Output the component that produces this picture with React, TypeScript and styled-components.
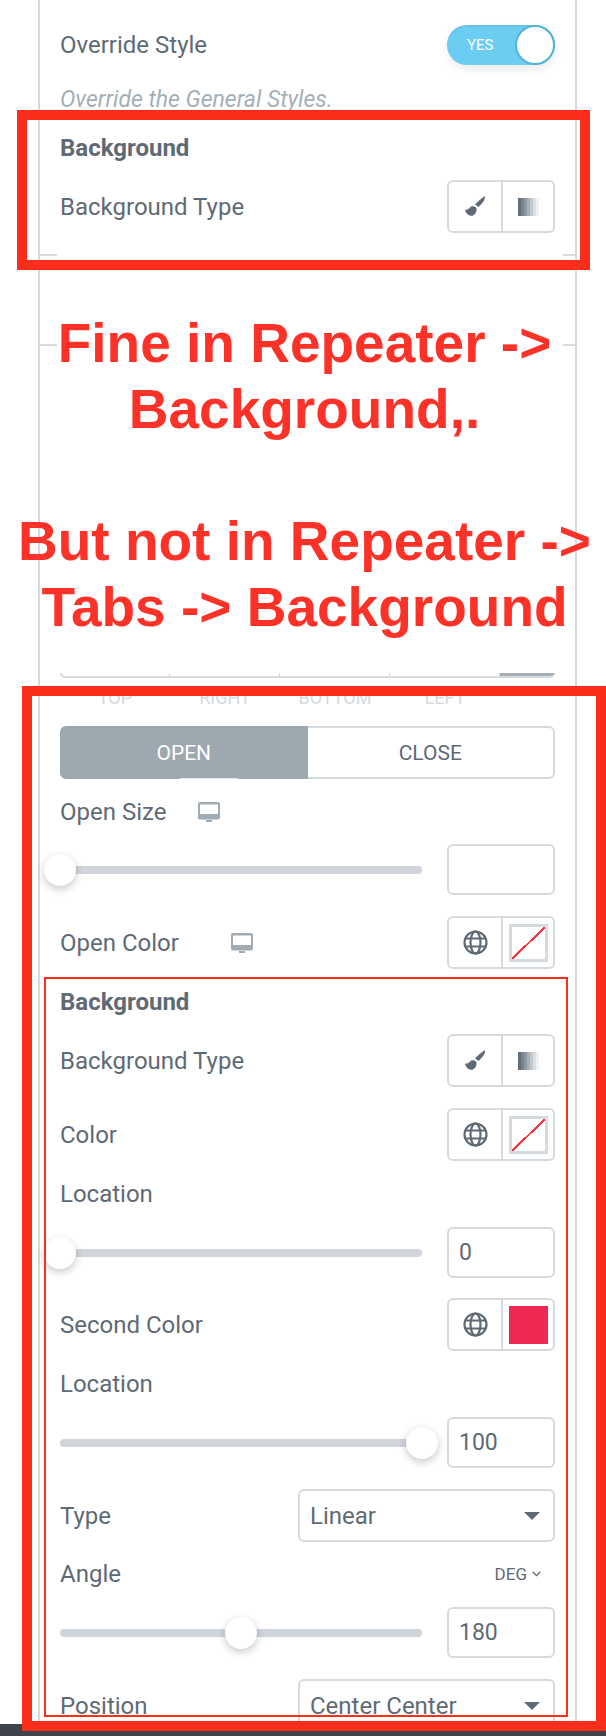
import React from "react";
import styled, { createGlobalStyle } from "styled-components";

const Global = createGlobalStyle`
  html, body { margin: 0; padding: 0; background: #fff; }
  * { box-sizing: border-box; }
`;

const RED = "#fb2d1b";
const LINE = "#d5dadf";
const TEXT = "#5f6a75";

const Page = styled.div`
  position: relative;
  width: 606px;
  height: 1736px;
  overflow: hidden;
  background: #fff;
  font-family: Roboto, "Liberation Sans", sans-serif;
  color: ${TEXT};
`;

const Panel = styled.div`
  width: 539px;
  height: 1724px;
  margin-left: 38px;
  padding: 25px 20px 0;
  border-left: 2px solid ${LINE};
  border-right: 2px solid ${LINE};
`;

const Footer = styled.div`
  position: relative;
  height: 12px;
  background: #3f444b;
`;

const Row = styled.div<{ $h: number; $mt?: number }>`
  display: flex;
  align-items: center;
  justify-content: space-between;
  height: ${(p) => p.$h}px;
  margin-top: ${(p) => p.$mt ?? 0}px;
`;

const LabelWrap = styled.div<{ $gap: number }>`
  display: flex;
  align-items: center;
  gap: ${(p) => p.$gap}px;
`;

const Label = styled.span`
  font-size: 24px;
  line-height: 24px;
  white-space: nowrap;
`;

const Heading = styled(Label)`
  font-weight: 700;
`;

const Hint = styled.div`
  margin-top: 23px;
  height: 24px;
  font-size: 23px;
  line-height: 24px;
  font-style: italic;
  color: #a4afb7;
`;

const Toggle = styled.div`
  position: relative;
  display: flex;
  align-items: center;
  width: 108px;
  height: 40px;
  padding-left: 20px;
  border-radius: 20px;
  background: #6ccdf2;
  box-shadow: inset 0 2px 2px rgba(0, 0, 0, 0.06), 0 4px 10px rgba(0, 0, 0, 0.08);
  color: #fff;
  font-size: 15px;
`;

const ToggleKnob = styled.span`
  position: absolute;
  right: 0;
  top: 0;
  width: 40px;
  height: 40px;
  border: 2px solid #54b2d6;
  border-radius: 50%;
  background: #fff;
`;

const Group = styled.div`
  display: flex;
  width: 108px;
  height: 53px;
  border: 2px solid ${LINE};
  border-radius: 6px;
  background: #fff;
`;

const GroupCell = styled.div`
  display: flex;
  align-items: center;
  justify-content: center;
  flex: 1 1 50%;
  & + & {
    border-left: 2px solid ${LINE};
  }
`;

const Swatch = styled.div<{ $color?: string }>`
  width: 39px;
  height: 38px;
  background: ${(p) =>
    p.$color ??
    `linear-gradient(to bottom right, transparent calc(50% - 1px), #ff2f3a calc(50% - 1px), #ff2f3a calc(50% + 1px), transparent calc(50% + 1px))`};
  border: ${(p) => (p.$color ? "0" : `3px solid ${LINE}`)};
`;

const GradientChip = styled.div`
  width: 21px;
  height: 18px;
  background: linear-gradient(
    to right,
    #646e78 0 14%,
    #78828b 14% 28%,
    #8f98a0 28% 42%,
    #a9b0b6 42% 56%,
    #c3c8cd 56% 70%,
    #dcdfe2 70% 84%,
    #f0f1f3 84% 100%
  );
`;

const Ticks = styled.div`
  display: flex;
  justify-content: space-between;
  height: 2px;
  margin: 21px -20px 0;
  &::before,
  &::after {
    content: "";
    width: 17px;
    background: ${LINE};
  }
  &::after {
    width: 12px;
  }
`;

const Notice = styled.div`
  position: relative;
  height: 363px;
  margin: 54px -37px 0 -43px;
  font-family: "Liberation Sans", Arial, sans-serif;
  font-size: 55px;
  font-weight: 700;
  line-height: 66px;
  text-align: center;
  color: #fc3127;
  &::before,
  &::after {
    content: "";
    position: absolute;
    top: 34px;
    height: 2px;
    background: ${LINE};
  }
  &::before {
    left: 23px;
    width: 17px;
  }
  &::after {
    right: 17px;
    width: 12px;
  }
`;

const NoticeLine = styled.div<{ $gap?: number }>`
  margin-top: ${(p) => p.$gap ?? 0}px;
  white-space: nowrap;
`;

const DimBox = styled.div`
  display: flex;
  height: 5px;
  border-bottom: 2px solid ${LINE};
  border-left: 2px solid ${LINE};
  border-radius: 0 0 6px 6px;
  overflow: hidden;
`;

const DimCell = styled.div<{ $active?: boolean }>`
  flex: 0 0 ${(p) => (p.$active ? "55px" : "110px")};
  background: ${(p) => (p.$active ? "#a4afb7" : "transparent")};
  border-right: 1px solid ${LINE};
  &:first-child {
    flex-basis: 108px;
  }
`;

const DimLabels = styled.div`
  display: flex;
  height: 20px;
  margin-top: 10px;
`;

const DimLabel = styled.span`
  flex: 0 0 110px;
  text-align: center;
  font-size: 18px;
  line-height: 20px;
  color: ${LINE};
`;

const Tabs = styled.div`
  display: flex;
  height: 53px;
  margin-top: 18px;
  font-size: 21px;
`;

const Tab = styled.div<{ $active?: boolean }>`
  position: relative;
  display: flex;
  flex: 1 1 50%;
  align-items: center;
  justify-content: center;
  border: 2px solid ${(p) => (p.$active ? "#9da8af" : LINE)};
  border-left-width: ${(p) => (p.$active ? "2px" : "0")};
  border-radius: ${(p) => (p.$active ? "6px 0 0 6px" : "0 6px 6px 0")};
  background: ${(p) => (p.$active ? "#9da8af" : "#fff")};
  color: ${(p) => (p.$active ? "#fff" : TEXT)};
`;

const TabNotch = styled.span`
  position: absolute;
  left: 118px;
  bottom: -2px;
  width: 58px;
  height: 1px;
  background: #e3e7ea;
`;

const SliderTrack = styled.div`
  position: relative;
  width: 362px;
  height: 8px;
  border-radius: 4px;
  background: #d0d5db;
`;

const SliderKnob = styled.span<{ $pos: number }>`
  position: absolute;
  top: 50%;
  left: ${(p) => p.$pos}%;
  width: 32px;
  height: 32px;
  transform: translate(-50%, -50%);
  border-radius: 50%;
  background: #fff;
  box-shadow: 0 3px 8px rgba(0, 0, 0, 0.22);
`;

const NumberInput = styled.div`
  display: flex;
  align-items: center;
  width: 108px;
  height: 51px;
  padding-left: 10px;
  border: 2px solid ${LINE};
  border-radius: 6px;
  background: #fff;
  font-size: 23px;
`;

const Select = styled.div`
  display: flex;
  align-items: center;
  justify-content: space-between;
  width: 257px;
  height: 53px;
  padding: 0 13px 0 10px;
  border: 2px solid ${LINE};
  border-radius: 6px;
  background: #fff;
  font-size: 24px;
`;

const Caret = styled.span`
  width: 0;
  height: 0;
  border-left: 8px solid transparent;
  border-right: 8px solid transparent;
  border-top: 8px solid ${TEXT};
`;

const Unit = styled.div`
  display: flex;
  align-items: center;
  gap: 5px;
  margin-right: 14px;
  font-size: 17px;
`;

const RedBox = styled.div<{ $x: number; $y: number; $w: number; $h: number; $b: number }>`
  position: absolute;
  left: ${(p) => p.$x}px;
  top: ${(p) => p.$y}px;
  width: ${(p) => p.$w}px;
  height: ${(p) => p.$h}px;
  border: ${(p) => p.$b}px solid ${RED};
  pointer-events: none;
`;

const IconSvg = styled.svg`
  display: block;
`;

const Brush = () => (
  <IconSvg width="21" height="21" viewBox="0 0 21 21">
    <path
      fill="#5f6a75"
      d="M20 0C20.500 3 18 7 13.500 11L10 8.500C13 5 17 2 20 0zM0 13.500C2 14 4 13 5 11.500C6.500 9.500 9.500 10 11 11.500C12.500 13.500 11 18 8 19.500C4.500 20.500 1 18.500 0 13.500z"
    />
  </IconSvg>
);

const Globe = () => (
  <IconSvg width="25" height="25" viewBox="0 0 25 25" fill="none" stroke="#5f6a75" strokeWidth="2.200">
    <circle cx="12.500" cy="12.500" r="11" />
    <ellipse cx="12.500" cy="12.500" rx="5" ry="11" />
    <path d="M2.500 8.500h20M2.500 16.500h20" />
  </IconSvg>
);

const Monitor = () => (
  <IconSvg width="22" height="20" viewBox="0 0 22 20">
    <rect x="0" y="0" width="22" height="17.500" rx="2" fill="#a0abb3" />
    <rect x="2" y="2.500" width="18" height="9.500" fill="#fff" />
    <rect x="8" y="18" width="6" height="2" fill="#a0abb3" />
  </IconSvg>
);

const Chevron = () => (
  <IconSvg width="9" height="6" viewBox="0 0 9 6" fill="none" stroke="#5f6a75" strokeWidth="1.300">
    <path d="M.7 .8l3.800 3.800 3.800-3.800" />
  </IconSvg>
);

const BgTypeGroup = () => (
  <Group>
    <GroupCell>
      <Brush />
    </GroupCell>
    <GroupCell>
      <GradientChip />
    </GroupCell>
  </Group>
);

const ColorGroup = ({ color }: { color?: string }) => (
  <Group>
    <GroupCell>
      <Globe />
    </GroupCell>
    <GroupCell>
      <Swatch $color={color} />
    </GroupCell>
  </Group>
);

const SliderRow = ({ pos, value, mt }: { pos: number; value?: string; mt: number }) => (
  <Row $h={51} $mt={mt}>
    <SliderTrack>
      <SliderKnob $pos={pos} />
    </SliderTrack>
    <NumberInput>{value}</NumberInput>
  </Row>
);

export default function App() {
  return (
    <Page>
      <Global />
      <Panel>
        <Row $h={40}>
          <Label>Override Style</Label>
          <Toggle>
            YES
            <ToggleKnob />
          </Toggle>
        </Row>
        <Hint>Override the General Styles.</Hint>
        <Row $h={24} $mt={24}>
          <Heading>Background</Heading>
        </Row>
        <Row $h={53} $mt={20}>
          <Label>Background Type</Label>
          <BgTypeGroup />
        </Row>
        <Ticks />
        <Notice>
          <NoticeLine>Fine in Repeater -&gt;</NoticeLine>
          <NoticeLine>Background,.</NoticeLine>
          <NoticeLine $gap={66}>But not in Repeater -&gt;</NoticeLine>
          <NoticeLine>Tabs -&gt; Background</NoticeLine>
        </Notice>
        <DimBox>
          <DimCell />
          <DimCell />
          <DimCell />
          <DimCell />
          <DimCell $active />
        </DimBox>
        <DimLabels>
          <DimLabel>TOP</DimLabel>
          <DimLabel>RIGHT</DimLabel>
          <DimLabel>BOTTOM</DimLabel>
          <DimLabel>LEFT</DimLabel>
        </DimLabels>
        <Tabs>
          <Tab $active>
            OPEN
            <TabNotch />
          </Tab>
          <Tab>CLOSE</Tab>
        </Tabs>
        <Row $h={24} $mt={21}>
          <LabelWrap $gap={32}>
            <Label>Open Size</Label>
            <Monitor />
          </LabelWrap>
        </Row>
        <SliderRow pos={0} mt={20} />
        <Row $h={53} $mt={21}>
          <LabelWrap $gap={52}>
            <Label>Open Color</Label>
            <Monitor />
          </LabelWrap>
          <ColorGroup />
        </Row>
        <Row $h={24} $mt={21}>
          <Heading>Background</Heading>
        </Row>
        <Row $h={53} $mt={20}>
          <Label>Background Type</Label>
          <BgTypeGroup />
        </Row>
        <Row $h={53} $mt={21}>
          <Label>Color</Label>
          <ColorGroup />
        </Row>
        <Row $h={24} $mt={21}>
          <Label>Location</Label>
        </Row>
        <SliderRow pos={0} value="0" mt={21} />
        <Row $h={53} $mt={20}>
          <Label>Second Color</Label>
          <ColorGroup color="#ee2a54" />
        </Row>
        <Row $h={24} $mt={21}>
          <Label>Location</Label>
        </Row>
        <SliderRow pos={100} value="100" mt={21} />
        <Row $h={53} $mt={21}>
          <Label>Type</Label>
          <Select>
            Linear
            <Caret />
          </Select>
        </Row>
        <Row $h={24} $mt={20}>
          <Label>Angle</Label>
          <Unit>
            DEG
            <Chevron />
          </Unit>
        </Row>
        <SliderRow pos={50} value="180" mt={21} />
        <Row $h={53} $mt={21}>
          <Label>Position</Label>
          <Select>
            Center Center
            <Caret />
          </Select>
        </Row>
      </Panel>
      <Footer />
      <RedBox $x={17} $y={110} $w={573} $h={160} $b={10} />
      <RedBox $x={22} $y={686} $w={584} $h={1045} $b={10} />
      <RedBox $x={44} $y={977} $w={524} $h={740} $b={2.5} />
    </Page>
  );
}
